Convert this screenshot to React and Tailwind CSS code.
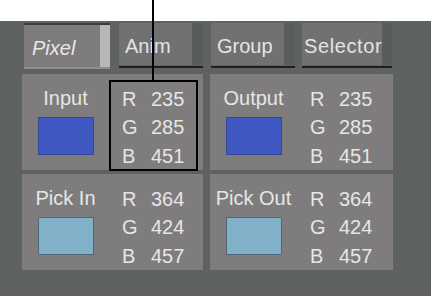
const font = "font-['Liberation_Sans','Arial',sans-serif]"

const Tab = ({ label, width, selected, className = '', textClass = 'pl-[6px]' }) => {
  if (selected) {
    return (
      <div className={`flex flex-col ${className}`} style={{ width }}>
        <div className="h-[2px] bg-[#3c3d3c]" />
        <div className="flex h-[42px]">
          <div className="flex-1 bg-[#7d7b7b] flex items-center pl-[8px] pt-[3px] text-[20px] italic text-[#e8e8e8]">
            {label}
          </div>
          <div className="w-[10px] bg-[#b7b7b7]" />
        </div>
        <div className="h-[2px] bg-[#8f8d8d]" />
      </div>
    )
  }
  return (
    <div className={`flex flex-col ${className}`} style={{ width }}>
      <div className="flex h-[42px]">
        <div className={`flex-1 bg-[#717171] flex items-center pt-[4px] text-[20px] text-[#e4e4e4] whitespace-nowrap ${textClass}`}>
          {label}
        </div>
        <div className="w-[11px] bg-[#595d59]" />
      </div>
      <div className="mt-[1px] h-[2px] bg-[#1e1f1e]" />
    </div>
  )
}

const ColorPanel = ({ label, swatch, values, width }) => (
  <div className="flex h-[96px] bg-[#7f7c7d]" style={{ width }}>
    <div className="w-[87px] flex flex-col items-center pt-[12px]">
      <div className="text-[20px] leading-[24px] text-[#e6e6e6] whitespace-nowrap">{label}</div>
      <div className={`mt-[7px] w-[56px] h-[38px] border ${swatch}`} />
    </div>
    <div className="pl-[13px] pt-[11px] grid grid-cols-[29px_auto] text-[20px] leading-[28px] text-[#e6e6e6]">
      <span>R</span><span>{values[0]}</span>
      <span>G</span><span>{values[1]}</span>
      <span>B</span><span>{values[2]}</span>
    </div>
  </div>
)

const App = () => {
  return (
    <div className={`relative w-[431px] h-[296px] bg-white overflow-hidden ${font}`}>
      <div className="mt-[21px] h-[275px] bg-[#5f635f] pl-[22px] pt-[2px]">
        {/* Tabs */}
        <div className="flex items-start h-[46px]">
          <Tab label="Pixel" width={86} selected className="ml-[2px]" />
          <Tab label="Anim" width={84} className="ml-[9px]" />
          <Tab label="Group" width={84} className="ml-[8px]" />
          <Tab label="Selector" width={90} className="ml-[7px]" textClass="pl-[2px] tracking-[0.6px]" />
        </div>

        {/* Colour panels */}
        <div className="mt-[5px] grid grid-cols-[181px_183px] gap-x-[7px] gap-y-[4px]">
          <ColorPanel label="Input" swatch="bg-[#3f58c2] border-[#34489a]" values={['235', '285', '451']} width={181} />
          <ColorPanel label="Output" swatch="bg-[#3f58c2] border-[#34489a]" values={['235', '285', '451']} width={183} />
          <ColorPanel label="Pick In" swatch="bg-[#80b1c8] border-[#4f6474]" values={['364', '424', '457']} width={181} />
          <ColorPanel label="Pick Out" swatch="bg-[#80b1c8] border-[#4f6474]" values={['364', '424', '457']} width={183} />
        </div>
      </div>

      {/* Callout */}
      <div className="absolute left-[152px] top-0 w-[2px] h-[81px] bg-black" />
      <div className="absolute left-[109px] top-[80px] w-[89px] h-[91px] border-2 border-black" />
    </div>
  )
}

export default App
